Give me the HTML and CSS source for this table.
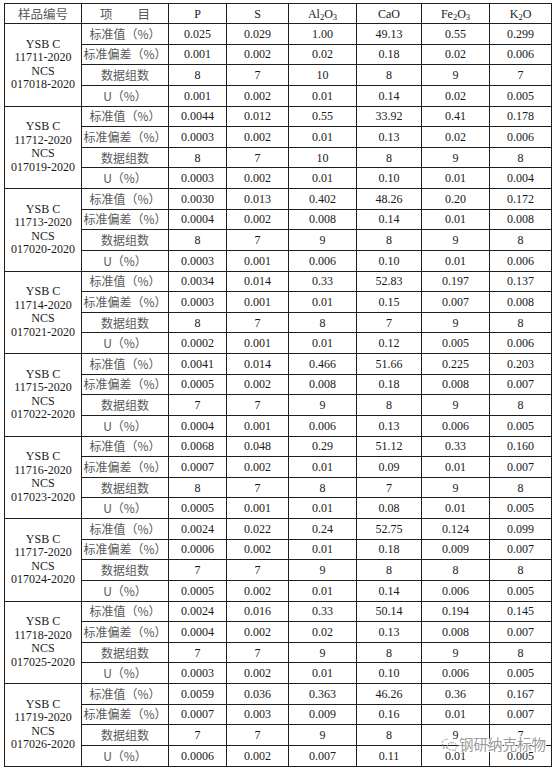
FILE: index.html
```html
<!DOCTYPE html>
<html lang="zh-CN">
<head>
<meta charset="utf-8">
<title>标准物质定值结果</title>
<link rel="stylesheet" href="styles.css">
</head>
<body>
<div class="page">
<table class="data">
<colgroup>
<col class="c-id"><col class="c-item"><col class="c-p"><col class="c-s"><col class="c-al"><col class="c-ca"><col class="c-fe"><col class="c-k">
</colgroup>
<thead>
<tr class="head">
<th class="zh">样品编号</th><th class="zh">项　　目</th><th>P</th><th>S</th><th>Al<sub>2</sub>O<sub>3</sub></th><th>CaO</th><th>Fe<sub>2</sub>O<sub>3</sub></th><th>K<sub>2</sub>O</th>
</tr>
</thead>
<tbody>
<tr><td rowspan="4" class="id">YSB C<br>11711-2020<br>NCS<br>017018-2020</td><td class="zh">标准值（%）</td><td>0.025</td><td>0.029</td><td>1.00</td><td>49.13</td><td>0.55</td><td>0.299</td></tr>
<tr><td class="zh">标准偏差（%）</td><td>0.001</td><td>0.002</td><td>0.02</td><td>0.18</td><td>0.02</td><td>0.006</td></tr>
<tr><td class="zh">数据组数</td><td>8</td><td>7</td><td>10</td><td>8</td><td>9</td><td>7</td></tr>
<tr><td class="zh">U（%）</td><td>0.001</td><td>0.002</td><td>0.01</td><td>0.14</td><td>0.02</td><td>0.005</td></tr>

<tr><td rowspan="4" class="id">YSB C<br>11712-2020<br>NCS<br>017019-2020</td><td class="zh">标准值（%）</td><td>0.0044</td><td>0.012</td><td>0.55</td><td>33.92</td><td>0.41</td><td>0.178</td></tr>
<tr><td class="zh">标准偏差（%）</td><td>0.0003</td><td>0.002</td><td>0.01</td><td>0.13</td><td>0.02</td><td>0.006</td></tr>
<tr><td class="zh">数据组数</td><td>8</td><td>7</td><td>10</td><td>8</td><td>9</td><td>8</td></tr>
<tr><td class="zh">U（%）</td><td>0.0003</td><td>0.002</td><td>0.01</td><td>0.10</td><td>0.01</td><td>0.004</td></tr>

<tr><td rowspan="4" class="id">YSB C<br>11713-2020<br>NCS<br>017020-2020</td><td class="zh">标准值（%）</td><td>0.0030</td><td>0.013</td><td>0.402</td><td>48.26</td><td>0.20</td><td>0.172</td></tr>
<tr><td class="zh">标准偏差（%）</td><td>0.0004</td><td>0.002</td><td>0.008</td><td>0.14</td><td>0.01</td><td>0.008</td></tr>
<tr><td class="zh">数据组数</td><td>8</td><td>7</td><td>9</td><td>8</td><td>9</td><td>8</td></tr>
<tr><td class="zh">U（%）</td><td>0.0003</td><td>0.001</td><td>0.006</td><td>0.10</td><td>0.01</td><td>0.006</td></tr>

<tr><td rowspan="4" class="id">YSB C<br>11714-2020<br>NCS<br>017021-2020</td><td class="zh">标准值（%）</td><td>0.0034</td><td>0.014</td><td>0.33</td><td>52.83</td><td>0.197</td><td>0.137</td></tr>
<tr><td class="zh">标准偏差（%）</td><td>0.0003</td><td>0.001</td><td>0.01</td><td>0.15</td><td>0.007</td><td>0.008</td></tr>
<tr><td class="zh">数据组数</td><td>8</td><td>7</td><td>8</td><td>7</td><td>9</td><td>8</td></tr>
<tr><td class="zh">U（%）</td><td>0.0002</td><td>0.001</td><td>0.01</td><td>0.12</td><td>0.005</td><td>0.006</td></tr>

<tr><td rowspan="4" class="id">YSB C<br>11715-2020<br>NCS<br>017022-2020</td><td class="zh">标准值（%）</td><td>0.0041</td><td>0.014</td><td>0.466</td><td>51.66</td><td>0.225</td><td>0.203</td></tr>
<tr><td class="zh">标准偏差（%）</td><td>0.0005</td><td>0.002</td><td>0.008</td><td>0.18</td><td>0.008</td><td>0.007</td></tr>
<tr><td class="zh">数据组数</td><td>7</td><td>7</td><td>9</td><td>8</td><td>9</td><td>8</td></tr>
<tr><td class="zh">U（%）</td><td>0.0004</td><td>0.001</td><td>0.006</td><td>0.13</td><td>0.006</td><td>0.005</td></tr>

<tr><td rowspan="4" class="id">YSB C<br>11716-2020<br>NCS<br>017023-2020</td><td class="zh">标准值（%）</td><td>0.0068</td><td>0.048</td><td>0.29</td><td>51.12</td><td>0.33</td><td>0.160</td></tr>
<tr><td class="zh">标准偏差（%）</td><td>0.0007</td><td>0.002</td><td>0.01</td><td>0.09</td><td>0.01</td><td>0.007</td></tr>
<tr><td class="zh">数据组数</td><td>8</td><td>7</td><td>8</td><td>7</td><td>9</td><td>8</td></tr>
<tr><td class="zh">U（%）</td><td>0.0005</td><td>0.001</td><td>0.01</td><td>0.08</td><td>0.01</td><td>0.005</td></tr>

<tr><td rowspan="4" class="id">YSB C<br>11717-2020<br>NCS<br>017024-2020</td><td class="zh">标准值（%）</td><td>0.0024</td><td>0.022</td><td>0.24</td><td>52.75</td><td>0.124</td><td>0.099</td></tr>
<tr><td class="zh">标准偏差（%）</td><td>0.0006</td><td>0.002</td><td>0.01</td><td>0.18</td><td>0.009</td><td>0.007</td></tr>
<tr><td class="zh">数据组数</td><td>7</td><td>7</td><td>9</td><td>8</td><td>8</td><td>8</td></tr>
<tr><td class="zh">U（%）</td><td>0.0005</td><td>0.002</td><td>0.01</td><td>0.14</td><td>0.006</td><td>0.005</td></tr>

<tr><td rowspan="4" class="id">YSB C<br>11718-2020<br>NCS<br>017025-2020</td><td class="zh">标准值（%）</td><td>0.0024</td><td>0.016</td><td>0.33</td><td>50.14</td><td>0.194</td><td>0.145</td></tr>
<tr><td class="zh">标准偏差（%）</td><td>0.0004</td><td>0.002</td><td>0.02</td><td>0.13</td><td>0.008</td><td>0.007</td></tr>
<tr><td class="zh">数据组数</td><td>7</td><td>7</td><td>9</td><td>8</td><td>9</td><td>8</td></tr>
<tr><td class="zh">U（%）</td><td>0.0003</td><td>0.002</td><td>0.01</td><td>0.10</td><td>0.006</td><td>0.005</td></tr>

<tr><td rowspan="4" class="id">YSB C<br>11719-2020<br>NCS<br>017026-2020</td><td class="zh">标准值（%）</td><td>0.0059</td><td>0.036</td><td>0.363</td><td>46.26</td><td>0.36</td><td>0.167</td></tr>
<tr><td class="zh">标准偏差（%）</td><td>0.0007</td><td>0.003</td><td>0.009</td><td>0.16</td><td>0.01</td><td>0.007</td></tr>
<tr><td class="zh">数据组数</td><td>7</td><td>7</td><td>9</td><td>8</td><td>9</td><td>7</td></tr>
<tr><td class="zh">U（%）</td><td>0.0006</td><td>0.002</td><td>0.007</td><td>0.11</td><td>0.01</td><td>0.005</td></tr>
</tbody>
</table>

<div class="watermark">
<svg class="wm-icon" width="17" height="13" viewBox="0 0 17 13" aria-hidden="true">
<path d="M6.5 1.2C3.4 1.2 1 3.1 1 5.5c0 1.3 0.7 2.5 1.9 3.3L2.4 10.6l2.1-1.1c0.6 0.2 1.3 0.3 2 0.3" fill="none" stroke="#8c8c8c" stroke-width="1" stroke-dasharray="1.6 1.1"/>
<path d="M11 4.6c-2.8 0-5 1.7-5 3.8s2.2 3.8 5 3.8c0.6 0 1.2-0.1 1.7-0.3l1.8 0.9-0.4-1.5c1-0.7 1.8-1.7 1.8-2.9 0-2.1-2.2-3.8-4.9-3.8z" fill="none" stroke="#8c8c8c" stroke-width="1" stroke-dasharray="1.6 1.1"/>
</svg>
<span class="wm-text">钢研纳克标物</span>
</div>
</div>
</body>
</html>
```
FILE: styles.css
```css
html, body {
  margin: 0;
  padding: 0;
  background: #ffffff;
}

.page {
  position: relative;
  width: 558px;
  height: 772px;
  padding: 3px 0 0 4px;
  box-sizing: border-box;
}

.data {
  border-collapse: collapse;
  table-layout: fixed;
  width: 547px;
  font-family: "Liberation Serif", "Noto Sans CJK SC", serif;
  font-size: 12px;
  color: #1a1a1a;
}

.c-id { width: 77px; }
.c-item { width: 87px; }
.c-p { width: 58px; }
.c-s { width: 62px; }
.c-al { width: 68px; }
.c-ca { width: 65px; }
.c-fe { width: 68px; }
.c-k { width: 62px; }

.data th,
.data td {
  border: 1px solid #1e1e1e;
  padding: 0;
  text-align: center;
  vertical-align: middle;
  font-weight: normal;
  line-height: 14px;
  white-space: nowrap;
  overflow: hidden;
}

.data tr.head {
  height: 20px;
}

.data tbody tr {
  height: 20.64px;
}

.data .zh {
  font-family: "Noto Sans CJK SC", sans-serif;
  font-size: 12px;
  color: #585858;
  letter-spacing: 0;
}

.data th.zh {
  font-size: 12.5px;
}

.data td.id {
  font-size: 12px;
  line-height: 13.6px;
  color: #1a1a1a;
}

.data sub {
  font-size: 8.5px;
  vertical-align: -2px;
  line-height: 0;
}

.watermark {
  position: absolute;
  left: 441px;
  top: 736px;
  display: flex;
  align-items: center;
  gap: 1px;
  pointer-events: none;
}

.wm-icon {
  display: block;
}

.wm-text {
  font-family: "Noto Sans CJK SC", sans-serif;
  font-size: 14.5px;
  line-height: 16px;
  color: rgba(125, 125, 125, 0.8);
  text-shadow: 1px 0 0 #fff, -1px 0 0 #fff, 0 1px 0 #fff, 0 -1px 0 #fff;
}
```
